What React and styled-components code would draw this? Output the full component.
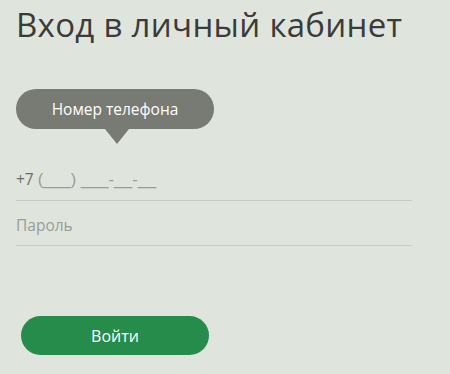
import React from "react";
import styled, { createGlobalStyle } from "styled-components";

const GlobalStyle = createGlobalStyle`
  html, body {
    margin: 0;
    padding: 0;
    background: #dfe5dd;
  }
  body {
    font-family: "Open Sans", "Noto Sans", sans-serif;
  }
`;

const Page = styled.div`
  width: 450px;
  height: 374px;
  box-sizing: border-box;
  padding: 2px 38px 0 16px;
  display: flex;
  flex-direction: column;
`;

const Title = styled.h1`
  margin: 0;
  font-size: 33px;
  font-weight: 400;
  line-height: 46px;
  color: #3b3b39;
  letter-spacing: 0.3px;
`;

const Tooltip = styled.div`
  position: relative;
  align-self: flex-start;
  margin-top: 41px;
  width: 198px;
  height: 40px;
  border-radius: 20px;
  background: #787a74;
  color: #ffffff;
  font-size: 15.5px;
  display: flex;
  align-items: center;
  justify-content: center;

  &::after {
    content: "";
    position: absolute;
    left: 89px;
    top: 40px;
    border-left: 12px solid transparent;
    border-right: 12px solid transparent;
    border-top: 15px solid #787a74;
  }
`;

const Fields = styled.div`
  margin-top: 27px;
  display: flex;
  flex-direction: column;
`;

const Field = styled.div`
  height: 45px;
  box-sizing: border-box;
  border-bottom: 1px solid #c7ccc4;
  display: flex;
  align-items: center;
  font-size: 15.5px;
  color: ${(p) => (p.$filled ? "#6b6d69" : "#9a9c98")};
  white-space: pre;
  padding-top: ${(p) => (p.$filled ? "2px" : "3px")};
`;

const Mask = styled.span`
  font-family: "Liberation Sans", sans-serif;
  font-size: 16.5px;
  color: #9a9c98;
`;

const Button = styled.button`
  margin-top: 70px;
  margin-left: 5px;
  width: 188px;
  height: 39px;
  border: none;
  border-radius: 20px;
  background: #268c4b;
  color: #ffffff;
  font-family: inherit;
  font-size: 16px;
  cursor: pointer;
`;

export default function App() {
  return (
    <>
      <GlobalStyle />
      <Page>
        <Title>Вход в личный кабинет</Title>
        <Tooltip>Номер телефона</Tooltip>
        <Fields>
          <Field $filled>
            +7 <Mask>(___) ___-__-__</Mask>
          </Field>
          <Field>Пароль</Field>
        </Fields>
        <Button>Войти</Button>
      </Page>
    </>
  );
}
